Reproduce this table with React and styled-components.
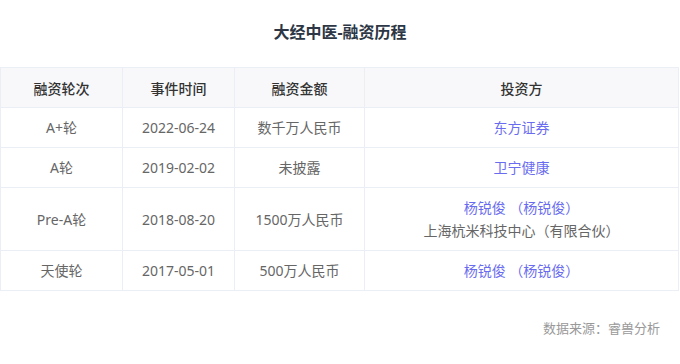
import React from "react";
import styled, { createGlobalStyle } from "styled-components";

const GlobalStyle = createGlobalStyle`
  body {
    margin: 0;
    background: #fff;
    font-family: "Noto Sans", "Noto Sans CJK SC", sans-serif;
  }
`;

const Page = styled.div`
  width: 680px;
  height: 364px;
  display: flex;
  flex-direction: column;
`;

const Title = styled.h2`
  margin: 0;
  height: 68px;
  padding-bottom: 6px;
  box-sizing: border-box;
  display: flex;
  align-items: center;
  justify-content: center;
  font-size: 16px;
  font-weight: 700;
  color: #2c3644;
`;

const Table = styled.table`
  width: 679px;
  border-collapse: collapse;
  table-layout: fixed;
  font-size: 14px;
  color: #666;
`;

const Th = styled.th`
  height: 39px;
  background: #f8f8fa;
  border: 1px solid #eceef5;
  font-weight: 500;
  color: #333;
  text-align: center;
  padding: 0;
`;

const Td = styled.td`
  height: ${p => p.$h || 39}px;
  border: 1px solid #eceef5;
  text-align: center;
  padding: 0;
  line-height: 23px;
`;

const Link = styled.div`
  color: #6a6cf0;
`;

const Plain = styled.div`
  color: #666;
`;

const Source = styled.div`
  margin-top: auto;
  height: 74px;
  display: flex;
  align-items: center;
  justify-content: flex-end;
  padding-right: 20px;
  font-size: 13px;
  color: #999;
`;

const rows = [
  { round: "A+轮", date: "2022-06-24", amount: "数千万人民币", investors: [["东方证券", true]] },
  { round: "A轮", date: "2019-02-02", amount: "未披露", investors: [["卫宁健康", true]] },
  {
    round: "Pre-A轮",
    date: "2018-08-20",
    amount: "1500万人民币",
    h: 62,
    investors: [["杨锐俊 （杨锐俊）", true], ["上海杭米科技中心（有限合伙）", false]]
  },
  { round: "天使轮", date: "2017-05-01", amount: "500万人民币", investors: [["杨锐俊 （杨锐俊）", true]] }
];

export default function App() {
  return (
    <Page>
      <GlobalStyle />
      <Title>大经中医-融资历程</Title>
      <Table>
        <colgroup>
          <col style={{ width: 122 }} />
          <col style={{ width: 112 }} />
          <col style={{ width: 130 }} />
          <col />
        </colgroup>
        <thead>
          <tr>
            <Th>融资轮次</Th>
            <Th>事件时间</Th>
            <Th>融资金额</Th>
            <Th>投资方</Th>
          </tr>
        </thead>
        <tbody>
          {rows.map(r => (
            <tr key={r.date}>
              <Td $h={r.h}>{r.round}</Td>
              <Td $h={r.h}>{r.date}</Td>
              <Td $h={r.h}>{r.amount}</Td>
              <Td $h={r.h}>
                {r.investors.map(([name, link]) =>
                  link ? <Link key={name}>{name}</Link> : <Plain key={name}>{name}</Plain>
                )}
              </Td>
            </tr>
          ))}
        </tbody>
      </Table>
      <Source>数据来源：睿兽分析</Source>
    </Page>
  );
}
